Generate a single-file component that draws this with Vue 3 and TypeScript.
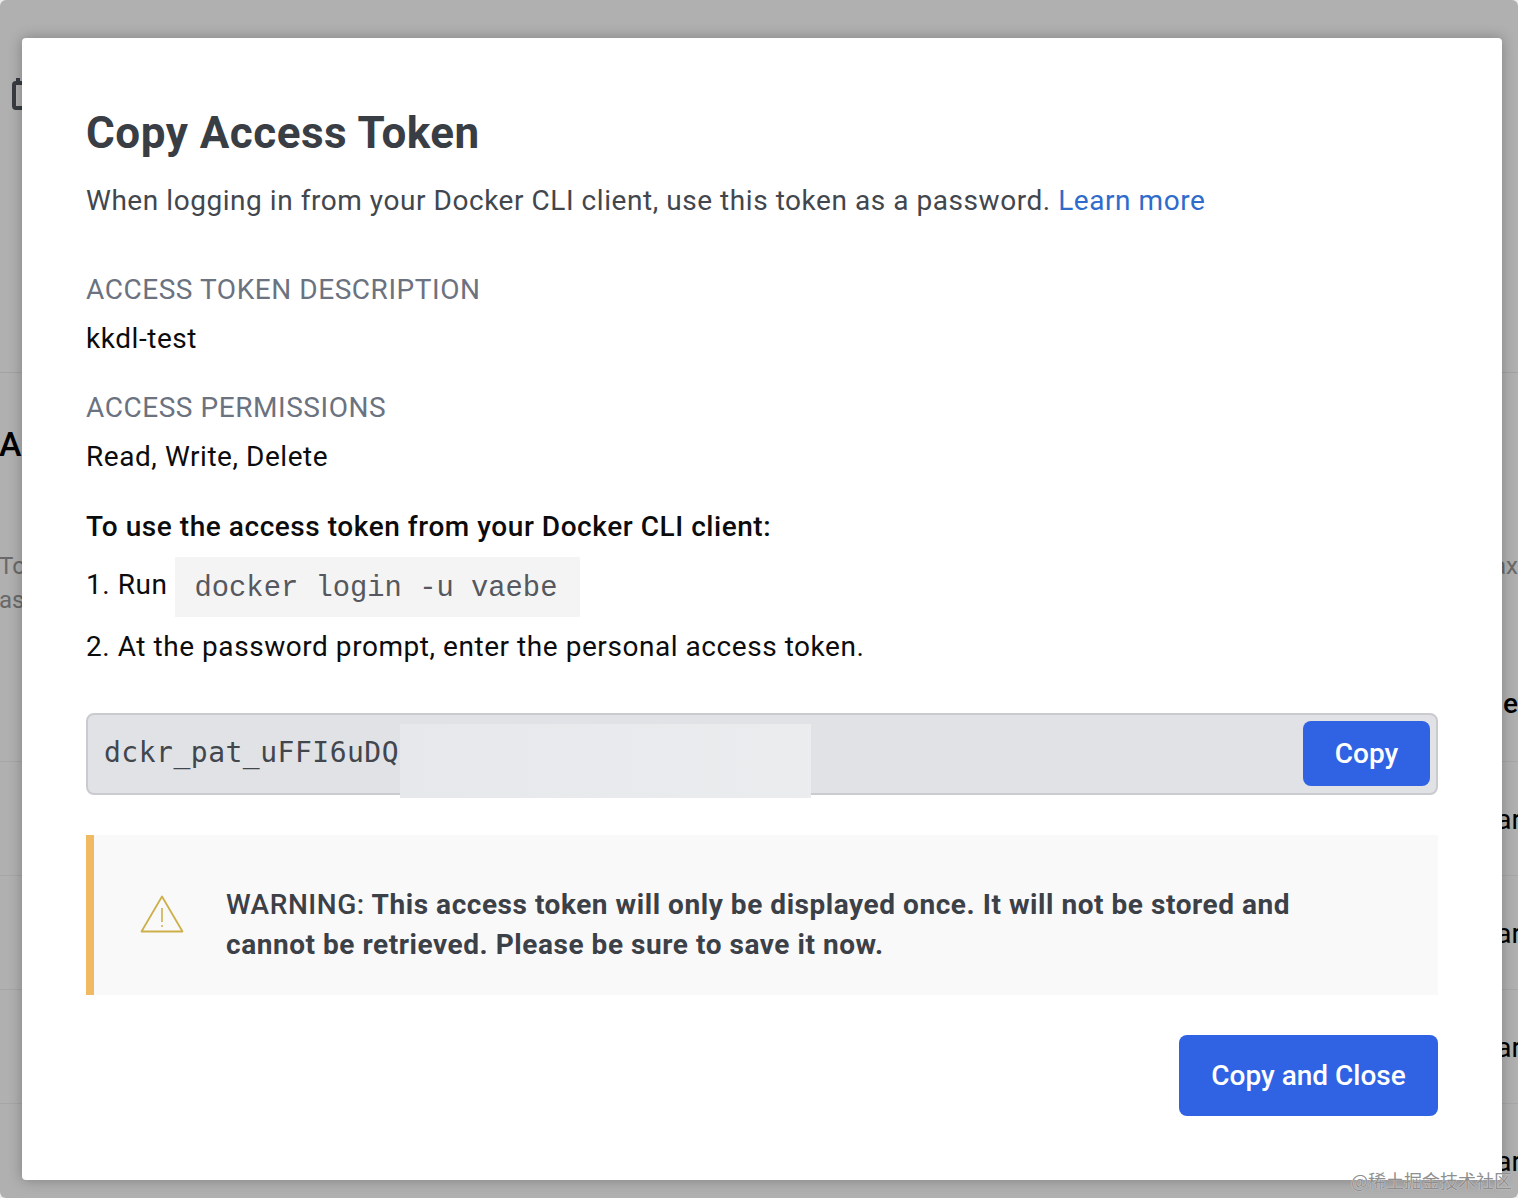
<script setup lang="ts">
const rowTexts: string[] = ['ar', 'ar', 'ar', 'ar']
</script>

<template>
  <div class="screen">
    <div class="page">
      <header class="hero">
        <svg class="calendar" width="24" height="36" viewBox="0 0 24 36" aria-hidden="true">
          <rect x="3" y="7" width="22" height="25" rx="2" fill="none" stroke="#383b41" stroke-width="4" />
          <rect x="5" y="2" width="4" height="6" fill="#383b41" />
        </svg>
      </header>
      <section class="intro">
        <div class="heading">A</div>
        <div class="note-row">
          <span>To</span>
          <span>ax</span>
        </div>
        <div class="note-row second"><span>as</span></div>
      </section>
      <div class="row head-row"><span>e</span></div>
      <div v-for="(text, i) in rowTexts" :key="i" class="row"><span>{{ text }}</span></div>
    </div>

    <main class="modal">
      <h1>Copy Access Token</h1>
      <p class="lead">
        When logging in from your Docker CLI client, use this token as a password.
        <a href="#">Learn more</a>
      </p>

      <h2>ACCESS TOKEN DESCRIPTION</h2>
      <p class="value">kkdl-test</p>

      <h2 class="perm">ACCESS PERMISSIONS</h2>
      <p class="value">Read, Write, Delete</p>

      <p class="use">To use the access token from your Docker CLI client:</p>
      <div class="step">1. Run <code>docker login -u vaebe</code></div>
      <p class="step2">2. At the password prompt, enter the personal access token.</p>

      <div class="token">
        <span class="token-text">dckr_pat_uFFI6uDQ</span>
        <span class="redact"></span>
        <button class="btn small">Copy</button>
      </div>

      <div class="warning">
        <svg class="warn-icon" width="44" height="40" viewBox="0 0 44 40" aria-hidden="true">
          <path d="M22 2.5 L42.5 37.5 H1.5 Z" fill="none" stroke="#cdb04a" stroke-width="1.8" stroke-linejoin="round" />
          <path d="M22 14 V28" stroke="#cdb04a" stroke-width="1.6" fill="none" />
          <circle cx="22" cy="32" r="1" fill="#cdb04a" />
        </svg>
        <p><span class="warn-label">WARNING:</span> This access token will only be displayed once. It will not be stored and cannot be retrieved. Please be sure to save it now.</p>
      </div>

      <div class="actions">
        <button class="btn large">Copy and Close</button>
      </div>
    </main>

    <div class="watermark">@稀土掘金技术社区</div>
  </div>
</template>

<style>
html, body { margin: 0; background: #ececec; }
</style>

<style scoped>
.screen {
  position: relative;
  width: 1518px;
  height: 1198px;
  overflow: hidden;
  font-family: Roboto, "Liberation Sans", sans-serif;
}
.page {
  height: 1198px;
  background: #b0b0b0;
  border-radius: 6px;
  overflow: hidden;
  color: #000;
}
.hero {
  height: 373px;
  box-sizing: border-box;
  padding-top: 76px;
  padding-left: 11px;
  border-bottom: 1px solid #a2a2a2;
}
.calendar { display: block; }
.intro { height: 274px; box-sizing: border-box; padding-top: 50px; margin-left: -1px; }
.heading { font-size: 34px; font-weight: 500; line-height: 42px; }
.note-row {
  display: flex;
  justify-content: space-between;
  margin-top: 84px;
  font-size: 24px;
  line-height: 34px;
  color: #696969;
}
.note-row.second { margin-top: 0; }
.row {
  height: 114px;
  box-sizing: border-box;
  display: flex;
  justify-content: flex-end;
  align-items: flex-end;
  padding-bottom: 37px;
  border-bottom: 1px solid #a6a6a6;
  font-size: 28px;
  line-height: 36px;
  margin-right: -3px;
}
.row.head-row { height: 115px; padding-bottom: 39px; font-weight: 500; margin-right: 0; }

.modal {
  position: absolute;
  left: 22px;
  top: 38px;
  width: 1480px;
  height: 1142px;
  box-sizing: border-box;
  padding: 64px 64px 0;
  background: #fff;
  border-radius: 4px;
  box-shadow: 0 0 14px rgba(0, 0, 0, 0.28);
  letter-spacing: 0.55px;
}
h1 {
  margin: 0;
  font-size: 44px;
  line-height: 62px;
  font-weight: 700;
  color: #393d44;
  letter-spacing: 0.5px;
}
.lead {
  margin: 19px 0 0;
  font-size: 28px;
  line-height: 36px;
  color: #42464d;
}
.lead a { color: #2f6bcb; text-decoration: none; }
h2 {
  margin: 52px 0 0;
  font-size: 28px;
  line-height: 38px;
  font-weight: 400;
  color: #6b7280;
}
h2.perm { margin-top: 31px; }
.value {
  margin: 11px 0 0;
  font-size: 28px;
  line-height: 38px;
  color: #0c0c0c;
}
.use {
  margin: 32px 0 0;
  font-size: 28px;
  line-height: 38px;
  font-weight: 500;
  color: #0c0c0c;
}
.step {
  margin-top: 11px;
  font-size: 28px;
  line-height: 56px;
  color: #0c0c0c;
  display: flex;
  gap: 7px;
}
code {
  display: block;
  box-sizing: border-box;
  height: 60px;
  padding: 2px 23px 0 20px;
  background: #f4f4f4;
  font-family: "Liberation Mono", monospace;
  font-size: 28.8px;
  line-height: 60px;
  letter-spacing: 0;
  color: #55585e;
}
.step2 {
  margin: 11px 0 0;
  font-size: 28px;
  line-height: 38px;
  color: #0c0c0c;
}
.token {
  position: relative;
  display: flex;
  align-items: center;
  justify-content: space-between;
  box-sizing: border-box;
  height: 82px;
  margin-top: 47px;
  padding: 0 6px 0 16px;
  background: #e0e2e6;
  border: 2px solid #c9cbcf;
  border-radius: 8px;
}
.token-text {
  font-family: "DejaVu Sans Mono", monospace;
  font-size: 28px;
  letter-spacing: 0.5px;
  color: #42464d;
  margin-top: -4px;
}
.redact {
  position: absolute;
  left: 312px;
  top: 9px;
  width: 411px;
  height: 74px;
  background: linear-gradient(90deg, #e7e8eb, #ebecee);
}
.btn {
  border: none;
  background: #2f63e3;
  color: #fff;
  font-family: Roboto, "Liberation Sans", sans-serif;
  font-size: 28px;
  font-weight: 500;
  letter-spacing: 0;
}
.btn.small { width: 127px; height: 65px; border-radius: 8px; margin-top: -2px; padding-top: 2px; }
.btn.large { width: 259px; height: 81px; border-radius: 8px; }
.warning {
  display: flex;
  align-items: center;
  gap: 42px;
  box-sizing: border-box;
  height: 160px;
  margin-top: 40px;
  padding: 0 100px 0 46px;
  background: #f9f9fa;
  border-left: 8px solid #f0ba62;
}
.warn-icon { flex: none; margin-top: -2px; }
.warning p {
  margin: 20px 0 0;
  font-size: 28px;
  line-height: 40px;
  font-weight: 700;
  color: #3c4047;
}
.warn-label { font-weight: 500; }
.actions {
  display: flex;
  justify-content: flex-end;
  margin-top: 40px;
}
.watermark {
  position: absolute;
  right: 6px;
  bottom: 6px;
  font-family: "Noto Sans CJK SC", sans-serif;
  font-size: 18px;
  line-height: 24px;
  color: #8f8f8f;
  text-shadow: 0 0 1px #fff;
}
</style>
